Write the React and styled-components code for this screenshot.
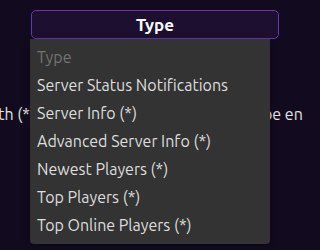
import React from "react";
import styled, { createGlobalStyle } from "styled-components";

const Global = createGlobalStyle`
  html, body { margin: 0; padding: 0; background: #120a1f; }
  body { font-family: "Ubuntu", Lato, "Noto Sans", sans-serif; overflow: hidden; }
`;

const Page = styled.div`
  width: 303px;
  height: 250px;
  position: relative;
  overflow: hidden;
  display: flex;
  flex-direction: column;
`;

const Field = styled.div`
  position: relative;
  margin: 10px 0 0 31px;
  width: 248px;
`;

const SelectBox = styled.div`
  box-sizing: border-box;
  height: 29px;
  border: 1px solid #6a35ad;
  border-radius: 5px;
  background: #1d0f30;
  color: #ffffff;
  font-weight: 700;
  font-size: 17px;
  display: flex;
  align-items: center;
  justify-content: center;
`;

const List = styled.ul`
  position: absolute;
  left: -1px;
  top: 29px;
  width: 240px;
  margin: 0;
  padding: 4px 0 5px;
  list-style: none;
  background: #333333;
  border-radius: 0 0 4px 4px;
  box-shadow: 0 2px 6px rgba(0,0,0,0.3);
  z-index: 2;
`;

const Option = styled.li`
  height: 28px;
  line-height: 28px;
  padding-left: 7px;
  font-size: 16px;
  color: ${(p) => (p.$placeholder ? "#747474" : "#dedede")};
  white-space: nowrap;
`;

const Hint = styled.p`
  margin: 66px 0 0 -121px;
  font-size: 16px;
  color: #e4e4e4;
  white-space: nowrap;
`;

const options = [
  "Server Status Notifications",
  "Server Info (*)",
  "Advanced Server Info (*)",
  "Newest Players (*)",
  "Top Players (*)",
  "Top Online Players (*)",
];

export default function App() {
  return (
    <Page>
      <Global />
      <Field>
        <SelectBox>Type</SelectBox>
        <List>
          <Option $placeholder>Type</Option>
          {options.map((o) => (
            <Option key={o}>{o}</Option>
          ))}
        </List>
      </Field>
      <Hint>Types marked with (*) require the server query API to be enabled.</Hint>
    </Page>
  );
}
